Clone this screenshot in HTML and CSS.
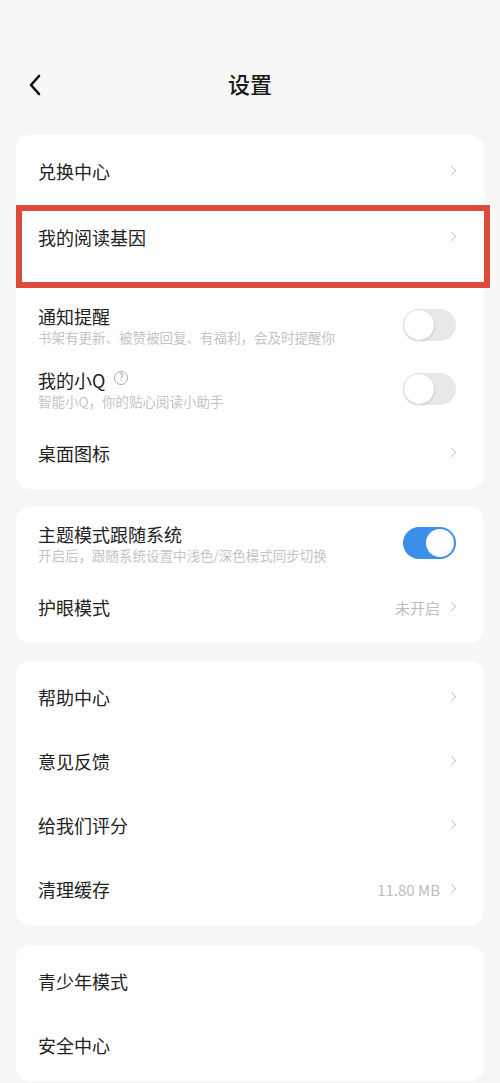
FILE: index.html
```html
<!DOCTYPE html>
<html lang="zh-CN">
<head>
<meta charset="utf-8">
<title>设置</title>
<link rel="stylesheet" href="styles.css">
</head>
<body>
<div class="page">
  <header class="topbar">
    <span class="back">
      <svg width="14" height="24" viewBox="0 0 14 24"><path d="M11 3 L3 12 L11 21" fill="none" stroke="#111" stroke-width="2.6" stroke-linecap="round" stroke-linejoin="round"/></svg>
    </span>
    <h1 class="title">设置</h1>
  </header>

  <section class="card">
    <div class="row"><span class="label">兑换中心</span><span class="chev"></span></div>
    <div class="row tall marked"><span class="label">我的阅读基因</span><span class="chev"></span></div>
    <div class="row">
      <div class="texts"><span class="label">通知提醒</span><span class="sub">书架有更新、被赞被回复、有福利，会及时提醒你</span></div>
      <span class="toggle"></span>
    </div>
    <div class="row">
      <div class="texts"><span class="label">我的小Q <span class="help">?</span></span><span class="sub">智能小Q，你的贴心阅读小助手</span></div>
      <span class="toggle"></span>
    </div>
    <div class="row"><span class="label">桌面图标</span><span class="chev"></span></div>
  </section>

  <section class="card">
    <div class="row">
      <div class="texts"><span class="label">主题模式跟随系统</span><span class="sub">开启后，跟随系统设置中浅色/深色模式同步切换</span></div>
      <span class="toggle on"></span>
    </div>
    <div class="row"><span class="label">护眼模式</span><span class="right"><span class="value">未开启</span><span class="chev"></span></span></div>
  </section>

  <section class="card">
    <div class="row"><span class="label">帮助中心</span><span class="chev"></span></div>
    <div class="row"><span class="label">意见反馈</span><span class="chev"></span></div>
    <div class="row"><span class="label">给我们评分</span><span class="chev"></span></div>
    <div class="row"><span class="label">清理缓存</span><span class="right"><span class="value">11.80 MB</span><span class="chev"></span></span></div>
  </section>

  <section class="card last">
    <div class="row"><span class="label">青少年模式</span></div>
    <div class="row"><span class="label">安全中心</span></div>
  </section>
</div>
</body>
</html>
```

FILE: styles.css
```css
* { box-sizing: border-box; }
html, body { margin: 0; padding: 0; }
body {
  background: #f7f7f7;
  font-family: "Noto Sans CJK SC", "Noto Sans", sans-serif;
  color: #222;
  width: 500px;
  height: 1083px;
  overflow: hidden;
}
.page {
  padding: 57px 16px 0 16px;
  display: flex;
  flex-direction: column;
  gap: 18px;
}
.topbar {
  height: 60px;
  display: flex;
  align-items: center;
  justify-content: center;
  position: relative;
}
.back {
  position: absolute;
  left: 12px;
  top: 16px;
  width: 14px;
  height: 24px;
  display: block;
}
.back svg { display: block; }
.title {
  margin: 0;
  font-size: 22px;
  font-weight: 500;
  color: #1a1a1a;
  line-height: 30px;
  position: relative;
  top: -4px;
}
.card {
  background: #fff;
  border-radius: 14px;
  padding: 4px 0;
}
.card.last { margin-top: 2px; }
.row {
  height: 64px;
  display: flex;
  align-items: center;
  justify-content: space-between;
  padding: 0 28px 0 22px;
  position: relative;
}
.row.tall {
  height: 90px;
  align-items: flex-start;
  padding-top: 21px;
}
.row.marked::after {
  content: "";
  position: absolute;
  left: 0;
  right: -6px;
  top: 2px;
  bottom: 5px;
  border: 6px solid #de4a3a;
  pointer-events: none;
}
.label {
  font-size: 18px;
  line-height: 26px;
  color: #222;
  display: flex;
  align-items: center;
}
.texts {
  display: flex;
  flex-direction: column;
}
.texts .label { line-height: 24px; }
.sub {
  font-size: 13.5px;
  line-height: 18px;
  color: #c4c4c4;
  margin-top: 0;
}
.help {
  display: inline-flex;
  align-items: center;
  justify-content: center;
  width: 14px;
  height: 14px;
  border: 1px solid #ababab;
  border-radius: 50%;
  font-size: 9.5px;
  line-height: 1;
  color: #a0a0a0;
  margin-left: 9px;
  margin-top: -4px;
}
.chev {
  width: 8px;
  height: 12px;
  display: block;
  position: relative;
}
.chev::before {
  content: "";
  position: absolute;
  left: 0;
  top: 2px;
  width: 6px;
  height: 6px;
  border-right: 1.5px solid #a9a9a9;
  border-top: 1.5px solid #a9a9a9;
  transform: rotate(45deg);
  border-radius: 1px;
}
.row.tall .chev { margin-top: 7px; }
.right {
  display: flex;
  align-items: center;
  gap: 8px;
}
.value {
  font-size: 15px;
  color: #bcbcbc;
}
.toggle {
  width: 53px;
  height: 32px;
  border-radius: 16px;
  background: #e8e8e8;
  position: relative;
  flex: none;
}
.toggle::after {
  content: "";
  position: absolute;
  left: 1px;
  top: 1px;
  width: 30px;
  height: 30px;
  border-radius: 50%;
  background: #fff;
  box-shadow: 0 1px 3px rgba(0,0,0,0.18);
}
.toggle.on { background: #3c8fe9; }
.toggle.on::after {
  left: auto;
  right: 2px;
  top: 2px;
  width: 28px;
  height: 28px;
  box-shadow: none;
}
```
